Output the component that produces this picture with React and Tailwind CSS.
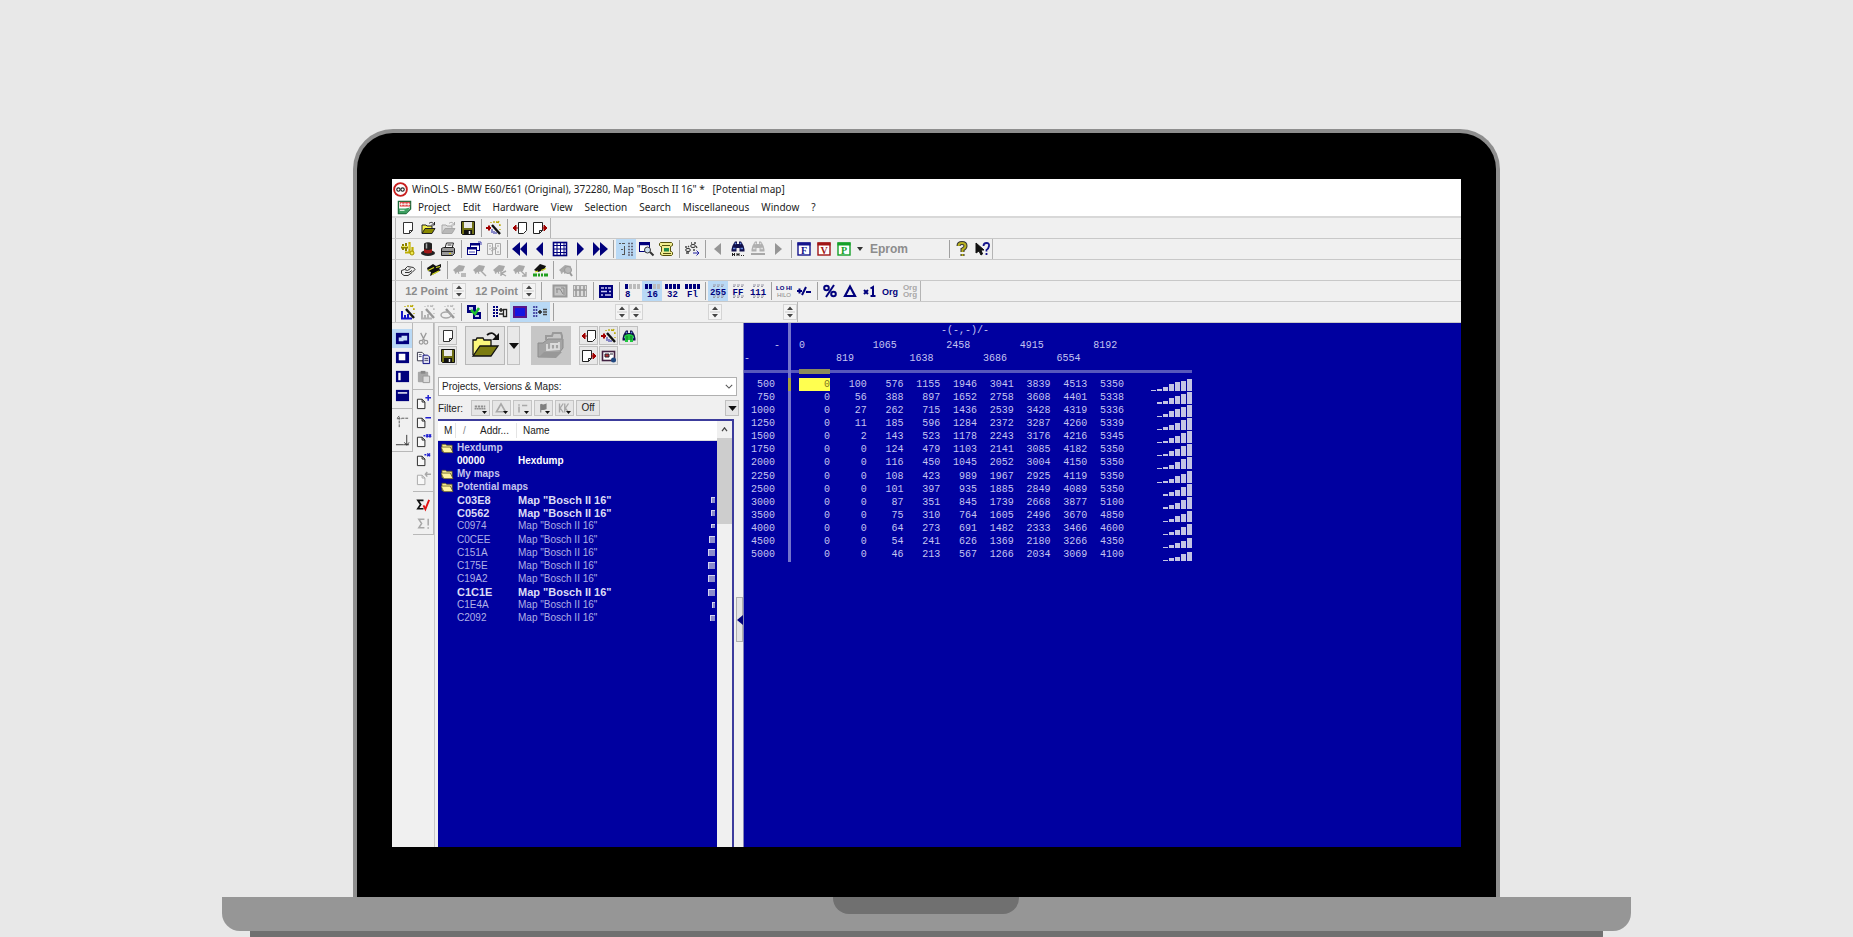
import clsx from 'clsx'

const NAVY = '#00007c'
const GREY = '#a8a8a8'

/* 16x16 toolbar glyphs */
const docShape = (c) => <path d="M3.5 2.5h9v8l-3 3h-6zM12.5 10.5h-3v3" fill="#fff" stroke={c} />
const folderShape = (line, front, back) => (
  <>
    <path d="M2 13V5h4l1 1h5v3" fill={back} stroke={line} />
    <path d="M2 13.5l3-5h10l-3 5z" fill={front} stroke={line} />
    <path d="M9 3.5c2-2 4-1 5 1M14.5 2v3h-3" fill="none" stroke={line} />
  </>
)
const wandShape = (c, sparkle, bars) => (
  <>
    <path d="M6 5l8 9" stroke={c} strokeWidth="2.4" />
    <path d="M10 2h1v1M13 5h1v1M8 1v2M13 1l-1 2M14 9v1M5 2v1" stroke={sparkle} fill="none" strokeWidth="1.3" />
    {bars && <path d="M2 14V7M5 14v-3M8 14v-4M1 14.5h11" stroke={bars} strokeWidth="2" />}
  </>
)
const binoShape = (c, light) => (
  <>
    <path d="M1.5 10.5q0-3 2.500-6.500l1-1.500h2V5h2V2.500h2l1 1.500q2.500 3.500 2.500 6.500v2h-5V9h-3v3.500h-5z" fill={c} />
    <path d="M3 9.500h2.500M10.500 9.500H13M5 5l1-1M10 4l1 1" stroke={light} strokeWidth="1.500" />
  </>
)
const dumpShape = (on, label) => (
  <>
    {[0, 1, 2, 3].map((i) => (
      <rect key={i} x={1 + i * 4} y="1" width="3" height="5" fill={i < on ? NAVY : '#bcbcbc'} />
    ))}
    <text x={label.length > 1 ? 3 : 1} y="14" fontSize="9" fontWeight="700" fill={NAVY} className="font-['Liberation_Mono',monospace]">
      {label}
    </text>
  </>
)
const digitShape = (label) => (
  <>
    <path d="M3 2h3M7 2h3M11 2h3M3 3.500h2M7 3.500h2M11 3.500h2M3 13h3M7 13h3M11 13h3M3 14.500h2M7 14.500h2M11 14.500h2" stroke="#9a9aa8" />
    <text x="8" y="11.500" textAnchor="middle" fontSize="9" fontWeight="700" fill={NAVY} className="font-['Liberation_Mono',monospace]">
      {label}
    </text>
  </>
)
const windowShape = (c, letter) => (
  <>
    <rect x="2" y="2" width="12" height="12" fill="#fff" stroke={c} strokeWidth="1.400" />
    <path d="M1.500 3h13" stroke={c} strokeWidth="3" />
    <text x="8" y="13" textAnchor="middle" fontSize="10" fontWeight="700" fill={c} className="font-['Liberation_Serif',serif]">
      {letter}
    </text>
  </>
)
const chipShape = (c, extra) => (
  <>
    <path d="M1 8l6-5 6 1-2 5-5 1-2 1z" fill={c} />
    <path d="M3 10l1 2M6 9l1 3" stroke={c} />
    {extra && <path d={extra} stroke={c} fill="none" strokeWidth="1.4" />}
  </>
)
const pageShape = (c, extra, mark) => (
  <>
    <path d="M1.500 4.500h5l3 3v7h-8zM6.500 4.500v3h3" fill="#f8f8f8" stroke={c} />
    <path d={extra} stroke={mark} strokeWidth="1.600" fill="none" />
  </>
)

const glyphs = {
  doc: docShape('#333'),
  open: folderShape('#222', '#8a8a00', '#f4f04a'),
  openOff: folderShape(GREY, '#b8b8b8', '#ddd'),
  save: (
    <>
      <path d="M1.500 1.500h13v13h-12l-1-1z" fill="#6e6e14" stroke="#111" />
      <path d="M4 2h8v6H4z" fill="#e8e8e8" />
      <path d="M4 10h8v4H4z" fill="#111" />
      <path d="M9.500 11v3" stroke="#eee" strokeWidth="1.500" />
    </>
  ),
  wand: (
    <>
      {wandShape('#111', '#b8a800')}
      <path d="M0 8h5M3 5.500v5" stroke="#a00000" strokeWidth="2" />
      <path d="M6 9v4M8 11v3M10 12v2" stroke="#2020a0" />
    </>
  ),
  docIn: (
    <>
      <path d="M6.500 2.500h8v8l-3 3h-5z" fill="#fff" stroke="#222" />
      <path d="M6 8H1M4 5L1 8l3 3z" stroke="#a00000" fill="#a00000" />
    </>
  ),
  docOut: (
    <>
      <path d="M1.500 2.500h9v8l-3 3h-6zM10.500 10.500h-3v3" fill="#fff" stroke="#222" />
      <path d="M10 8h5M12 5l3 3-3 3z" stroke="#a00000" fill="#a00000" />
    </>
  ),
  keys: (
    <>
      <path d="M1 6.500h7M3 3v6M6 2v8" stroke="#8a8000" strokeWidth="2" />
      <path d="M9.500 1v11M5 11.500h9M12.500 6v6" stroke="#c0b000" strokeWidth="2.200" />
      <path d="M2 5.500h5M9 3v5" stroke="#f0e850" />
      <circle cx="12" cy="12" r="2" fill="#f0e850" stroke="#a09000" />
    </>
  ),
  hat: (
    <>
      <ellipse cx="8" cy="12" rx="7" ry="3" fill="#222" />
      <path d="M4 2.500q4-2.500 8 0v9q-4 2-8 0z" fill="#222" />
      <path d="M4 8q4 2 8 0v3.500q-4 2-8 0z" fill="#a01818" />
      <path d="M6.500 2.500v5" stroke="#aaa" strokeWidth="1.500" />
    </>
  ),
  print: (
    <>
      <path d="M5 7l1.500-5h7L12 7" fill="#fff" stroke="#222" />
      <path d="M1.500 7.500l2-1h10l1 1v5l-2 2h-11z" fill="#999" stroke="#222" />
      <path d="M2 10.500h11M7.500 4h4" stroke="#222" />
      <path d="M9 12.500h2" stroke="#e0d000" />
    </>
  ),
  windows: (
    <>
      <rect x="4.500" y="2.500" width="9" height="7" fill="#fff" stroke={NAVY} />
      <rect x="1.500" y="6.500" width="9" height="7" fill="#fff" stroke={NAVY} />
      <path d="M4 3.500h10M1 7.500h10" stroke={NAVY} strokeWidth="2" />
      <path d="M3 11h6M12 1h3v3" stroke="#4040b0" fill="none" />
    </>
  ),
  compareOff: (
    <path d="M1.500 2.500h5v11h-5zM9.500 2.500h5v11h-5zM3 5h2M3 8h2M11 5h2M11 11h2M5 10l6-3M5 7h6" fill="none" stroke={GREY} />
  ),
  first: <path d="M8 1v14L0 8zM15 1v14L8 8z" fill={NAVY} />,
  prev: <path d="M11 1v14L4 8z" fill={NAVY} />,
  next: <path d="M5 1v14l7-7z" fill={NAVY} />,
  last: <path d="M1 1v14l7-7zM8 1v14l8-7z" fill={NAVY} />,
  prevOff: <path d="M11 2v12L4 8z" fill="#969696" />,
  nextOff: <path d="M5 2v12l7-6z" fill="#969696" />,
  grid: (
    <>
      <rect x="1.500" y="1.500" width="13" height="13" fill="#fff" stroke={NAVY} strokeWidth="1.600" />
      <path d="M1 4.500h14M1 8h14M1 11.500h14M5 2v13M8.500 2v13M12 2v13" stroke={NAVY} />
    </>
  ),
  tree: (
    <>
      <path d="M1 2.500h2M4 2.500h3M6.500 5v9M3 8.500h2M4 13.500h2" stroke="#555" fill="none" />
      <path d="M10 2.500h5M10 5.500h5M10 8.500h5M10 11.500h5M10 14h5" stroke="#667" strokeWidth="1.600" strokeDasharray="2 1" />
    </>
  ),
  zoomWin: (
    <>
      <rect x="1.500" y="1.500" width="10" height="9" fill="#fff" stroke={NAVY} />
      <path d="M1 3h11" stroke={NAVY} strokeWidth="2.500" />
      <circle cx="9.500" cy="9" r="3" fill="#cde" stroke="#333" />
      <path d="M12 11l3.500 3.500" stroke="#333" strokeWidth="2" />
    </>
  ),
  scroll: (
    <>
      <path d="M2.500 1.500h11l1 1v2l-2 1v5h1l1 1v2l-1 1h-9l-2-1v-2l1-1V5.500h-1l-1-1v-2z" fill="#f0ec90" stroke="#55500a" />
      <path d="M4 4.500h8M5 12.500h8" stroke="#55500a" />
      <path d="M6 7h5v3.500H6z" fill="#1f8a4a" />
    </>
  ),
  paws: (
    <>
      <ellipse cx="4" cy="9" rx="2.300" ry="1.700" fill="#ddd" stroke="#333" />
      <ellipse cx="9" cy="5" rx="2.300" ry="1.700" fill="#ddd" stroke="#333" />
      <path d="M1 6h2M4 5l1 1M7 2h1M10 2h2M12 5l1 2M2 12h3M9 9h2" stroke="#444" strokeWidth="1.300" />
      <path d="M9 12h6M12.500 9.500L15 12l-2.500 2.500" stroke="#2020a0" fill="none" />
    </>
  ),
  bino: (
    <>
      <g transform="translate(0 -2)">{binoShape('#10104c', '#6688dd')}</g>
      <path d="M2.500 12v3M4.500 12v3M2.500 13.500h2M7 12v3M9 12v3M7 13.500h2M11 14.500h1M13 14.500h1" stroke="#222" fill="none" />
    </>
  ),
  binoOff: (
    <>
      <g transform="translate(0 -2)">{binoShape('#b0b0b0', '#ddd')}</g>
      <path d="M1 13h14" stroke={GREY} strokeWidth="2" />
    </>
  ),
  winF: windowShape('#14148c', 'F'),
  winV: windowShape('#a01414', 'V'),
  winP: windowShape('#14a028', 'P'),
  help: (
    <>
      <path d="M4.500 5q0-3 3.500-3t3.500 3q0 2-3 3.500V11M8.500 13v2" fill="none" stroke="#333" strokeWidth="4" />
      <path d="M4.500 5q0-3 3.500-3t3.500 3q0 2-3 3.500V11M8.500 13v2" fill="none" stroke="#b8b020" strokeWidth="2" />
    </>
  ),
  pointHelp: (
    <>
      <path d="M2 2v10l3-2 2 4 1.500-1L7 9h3z" fill="#111" stroke="#111" />
      <path d="M9.500 5q0-3 3-3t2.500 3-2.500 4v1.500M12.500 12v2" stroke="#14148c" strokeWidth="1.800" fill="none" />
    </>
  ),
  hand: (
    <>
      <path d="M1.500 8.500l3-1 3-3 6 1 1.500 2-3 3-4 3H4l-2.500-2z" fill="#eee" stroke="#333" />
      <path d="M4.500 7.500l3 1 3-2M5 10.500h4l3-2" fill="none" stroke="#333" />
    </>
  ),
  chips: (
    <>
      <path d="M1 6l6-4 3 2 5-2v3l-2 2 2 1-5 3-6 3 1-4-3-1z" fill="#111" />
      <path d="M2 8.500l6-3M6 12.500l7-3.500M10 5.500l4-1" stroke="#d8e020" strokeWidth="1.200" />
    </>
  ),
  chipA: chipShape(GREY, 'M9 12h5M9 14h5'),
  chipB: chipShape(GREY, 'M9 9l5 5'),
  chipC: chipShape(GREY, 'M9 9v5M9 11l5 3M10 11l4-2'),
  chipD: chipShape(GREY, 'M9 9l5 5M14 10v4h-4'),
  chipOn: (
    <>
      <path d="M2 8l6-6 6 2-2 4-6 2z" fill="#111" />
      <path d="M9 8.500l5-2M3 10l3-1" stroke="#d8e020" strokeWidth="1.300" />
      <path d="M1 13h4M6 13h2M9 13h2M12 13h4" stroke="#20a020" strokeWidth="3" />
    </>
  ),
  chipFind: (
    <>
      {chipShape(GREY)}
      <circle cx="10" cy="8" r="3.500" fill="#b8b8b8" stroke="#999" />
      <path d="M12 11l2 3" stroke="#999" strokeWidth="2" />
    </>
  ),
  mapOff: (
    <>
      <rect x="1.500" y="2.500" width="13" height="11" fill="#c4c4c4" stroke="#999" strokeWidth="2" />
      <path d="M4 6h4l3 5h2M5 6v4M9 5h3v5" stroke="#888" fill="none" />
    </>
  ),
  colsOff: (
    <>
      <rect x="1.500" y="2.500" width="13" height="11" fill="#ddd" stroke={GREY} />
      <path d="M4 3v10M8 3v10M12 3v10M2 7h12" stroke="#999" strokeWidth="1.600" />
    </>
  ),
  hexWin: (
    <>
      <rect x="1" y="2" width="14" height="13" fill={NAVY} />
      <path d="M3 5h3M7 5h2M10 5h3M3 8.500h6M11 8.500h2M3 12h2M7 12h6" stroke="#c8c8f0" strokeWidth="1.500" />
    </>
  ),
  d8: dumpShape(1, '8'),
  d16: dumpShape(2, '16'),
  d32: dumpShape(4, '32'),
  dfl: dumpShape(4, 'Fl'),
  n255: digitShape('255'),
  nff: digitShape('FF'),
  n111: digitShape('111'),
  lohi: (
    <>
      <text x="8" y="7" textAnchor="middle" fontSize="6" fontWeight="700" fill={NAVY} className="font-['Liberation_Sans',sans-serif]">LO HI</text>
      <text x="8" y="14" textAnchor="middle" fontSize="6" fill="#888" className="font-['Liberation_Sans',sans-serif]">HILO</text>
    </>
  ),
  sign: <path d="M1 8h5M3.500 5.500v5M6 12l4-8M10 9h5" stroke={NAVY} strokeWidth="2" />,
  percent: (
    <>
      <circle cx="4.500" cy="5" r="2.300" fill="none" stroke={NAVY} strokeWidth="2" />
      <circle cx="11.500" cy="11" r="2.300" fill="none" stroke={NAVY} strokeWidth="2" />
      <path d="M12 2L4 14" stroke={NAVY} strokeWidth="2" />
    </>
  ),
  delta: <path d="M8 3.500L13 13H3z" fill="none" stroke={NAVY} strokeWidth="2.200" />,
  times: (
    <>
      <path d="M2 7l4 4M6 7l-4 4" stroke={NAVY} strokeWidth="2" />
      <path d="M8.500 5.500L11 4v9M8.500 13h5" stroke={NAVY} strokeWidth="2" fill="none" />
    </>
  ),
  org: <text x="8" y="12" textAnchor="middle" fontSize="9" fontWeight="700" fill={NAVY} className="font-['Liberation_Sans',sans-serif]">Org</text>,
  orgOff: (
    <>
      <text x="8" y="7" textAnchor="middle" fontSize="8" fontWeight="700" fill={GREY} className="font-['Liberation_Sans',sans-serif]">Org</text>
      <text x="8" y="14" textAnchor="middle" fontSize="8" fontWeight="700" fill={GREY} className="font-['Liberation_Sans',sans-serif]">Org</text>
    </>
  ),
  barWand: wandShape('#111', '#b8a800', '#1414c8'),
  barWandOff: wandShape('#999', '#bbb', '#b4b4b4'),
  ringWandOff: (
    <>
      {wandShape('#999', '#bbb')}
      <ellipse cx="6" cy="11" rx="5" ry="3" fill="none" stroke={GREY} strokeWidth="1.500" />
    </>
  ),
  screens: (
    <>
      <rect x="1" y="1" width="9" height="8" fill={NAVY} />
      <rect x="7" y="8" width="8" height="7" fill={NAVY} />
      <path d="M3 3h4v3H3zM9 11h4v2H9z" fill="#cce" />
      <path d="M5 6l4 4 4-6" stroke="#20c030" strokeWidth="2.500" fill="none" />
    </>
  ),
  listSwap: (
    <>
      <path d="M2 2v12M5 2v12" stroke={NAVY} strokeWidth="2" strokeDasharray="2 1" />
      <path d="M7 6h4M9 4v4M7 10h4" stroke="#222" strokeWidth="1.500" />
      <rect x="11.500" y="5.500" width="3" height="7" fill="#fff" stroke="#222" strokeWidth="1.400" />
    </>
  ),
  blueWin: (
    <>
      <rect x="1" y="2" width="14" height="12" fill="#5a1488" />
      <rect x="3" y="4" width="10" height="8" fill="#1414e0" />
    </>
  ),
  listMerge: (
    <>
      <path d="M2 2v12M4.500 2v12" stroke="#3a3a9c" strokeWidth="1.600" strokeDasharray="2 1" />
      <path d="M6 8h4M8 6v4" stroke="#222" strokeWidth="1.500" />
      <path d="M11 5.500h4M11 8h4M11 10.500h4" stroke="#444" strokeWidth="1.500" />
    </>
  ),
  selWin: (
    <>
      <rect x="1" y="2" width="14" height="12" fill={NAVY} />
      <path d="M4 11V7h3V5h6v5h-4v1z" fill="#c4dcf8" />
    </>
  ),
  winCenter: (
    <>
      <rect x="1" y="2" width="14" height="12" fill={NAVY} />
      <path d="M4 4h7v7H4z" fill="#fff" />
    </>
  ),
  winLeft: (
    <>
      <rect x="1" y="2" width="14" height="12" fill={NAVY} />
      <path d="M3.500 4h2.500v8H3.500z" fill="#fff" />
    </>
  ),
  winTop: (
    <>
      <rect x="1" y="2" width="14" height="12" fill={NAVY} />
      <path d="M3 4.500h10v1.500H3z" fill="#fff" />
    </>
  ),
  cornerTop: <path d="M4.500 14V3M2 5h5M7 4.500h7M4.500 2l-2 2" stroke="#555" fill="none" strokeDasharray="3 1" />,
  cornerBottom: <path d="M12.500 2v11M9 12.500h6M1 12.500h8M10 10l2.500 3L15 10" stroke="#333" fill="none" />,
  cut: (
    <>
      <path d="M5 2l4 8M11 2L7 10" stroke="#999" strokeWidth="1.300" />
      <circle cx="5.500" cy="12" r="2" fill="none" stroke="#999" strokeWidth="1.300" />
      <circle cx="10.500" cy="12" r="2" fill="none" stroke="#999" strokeWidth="1.300" />
    </>
  ),
  copy: (
    <>
      <path d="M1.500 2.500h5l2 2v7h-7z" fill="#fff" stroke="#334" />
      <path d="M7.500 5.500h5l2 2v7h-7z" fill="#dde" stroke={NAVY} />
      <path d="M3 5h3M3 7h3M9 9h4M9 11h4" stroke="#446" />
    </>
  ),
  paste: (
    <>
      <rect x="2" y="3" width="11" height="11" rx="1" fill={GREY} />
      <path d="M5 2h5v3H5z" fill="#888" />
      <path d="M7.500 7.500h7v7h-7z" fill="#ddd" stroke="#999" />
    </>
  ),
  pagePlus: pageShape('#222', 'M10 3h6M13 0v6', '#2020d0'),
  pageMinus: pageShape('#222', 'M10 4h6', '#2020d0'),
  pageX: pageShape('#222', 'M8 3h2M11 1.500l2 3M13 1.500l-2 3M14 1.500l2 3M16 1.500l-2 3', '#2020d0'),
  pageX2: pageShape('#222', 'M9 3h2M12 1.500l3 3M15 1.500l-3 3', '#2020d0'),
  pageOff: pageShape(GREY, 'M10 3.500h6M12 1l-2 2.500L12 6', GREY),
  sumOk: (
    <>
      <path d="M8 3.500H2l3 4.500-3 4.500h6" stroke="#111" strokeWidth="1.800" fill="none" />
      <path d="M8 9l2 4 4-10" stroke="#e01010" strokeWidth="2" fill="none" />
    </>
  ),
  sumOff: <path d="M9 3.500H3l3 4.500-3 4.500h6M13 3v7M13 12v1.500" stroke={GREY} strokeWidth="1.600" fill="none" />,
  tree3d: (
    <>
      {binoShape('#10104c', '#6688dd')}
      <path d="M3 8q5-4 10 0l-1 2v4H9v-2H7v2H4v-4z" fill="#20c840" />
      <path d="M6 8v4M10 8v4" stroke="#107020" />
    </>
  ),
  card: (
    <>
      <rect x="1.500" y="3.500" width="12" height="9" fill="#fff" stroke="#402040" strokeWidth="1.600" />
      <path d="M4 6h4v3H4zM9 6h3" fill="#c03030" stroke="#223" />
      <circle cx="12.500" cy="12" r="2.500" fill="#204880" />
    </>
  ),
  filtA: <path d="M1 6h14M2 8v2M5 8v2M8 8v2M11 8v2M14 8v2" stroke="#909090" strokeWidth="2.500" strokeDasharray="3 1" />,
  filtB: <path d="M8 2.500L14 13H2z" fill="none" stroke={GREY} strokeWidth="2.200" />,
  filtC: <path d="M4 3v2M4 6v8M8 4.500h7" stroke={GREY} strokeWidth="2" />,
  filtD: <path d="M5 3v11M5 3q3 2 7 0v6q-4 2-7 0" stroke="#808080" strokeWidth="1.500" fill="#808080" />,
  filtE: <path d="M2 2v12M7 2L3 8l4 6M9 2v12M14 2l-4 6 4 6" stroke={GREY} strokeWidth="1.800" fill="none" />,
}

function Glyph({ name, className = 'size-4' }) {
  return (
    <svg viewBox="0 0 16 16" className={clsx('shrink-0 overflow-visible', className)} aria-hidden="true">
      {glyphs[name]}
    </svg>
  )
}

function Tool({ name, active }) {
  return (
    <button
      type="button"
      aria-label={name}
      className={clsx('flex size-5 shrink-0 items-center justify-center', active && 'bg-[#b9d9f5]')}
    >
      <Glyph name={name} />
    </button>
  )
}

function Spinner() {
  return (
    <button type="button" aria-label="Change value" className="h-4 w-[14px] shrink-0 border border-[#d4d4d4] bg-[#f4f4f4]">
      <svg viewBox="0 0 12 14" className="h-full w-full">
        <path d="M6 1.500l3 3.500H3zM6 12.500L9 9H3z" fill="#444" />
        <path d="M1 7h10" stroke="#ccc" />
      </svg>
    </button>
  )
}

function PointField() {
  return (
    <div className="flex w-[70px] shrink-0 items-center justify-end gap-1 pr-[2px]">
      <span className="text-[11px] font-bold whitespace-nowrap text-[#8c8c8c]">12 Point</span>
      <Spinner />
    </div>
  )
}

function Sep() {
  return (
    <div className="flex w-[6px] shrink-0 justify-center py-px">
      <div className="w-px bg-[#a0a0a0]" />
    </div>
  )
}

/* '|' is a separator, a leading '*' marks a pressed button */
function Tools({ items }) {
  return items.split(' ').map((item, i) =>
    item === '|' ? <Sep key={i} /> : <Tool key={i} name={item.replace('*', '')} active={item.startsWith('*')} />
  )
}

function Bar({ children }) {
  return (
    <div className="flex h-[21px] border-b border-[#c8c8c8]">
      <div className="flex items-stretch border-r border-[#b4b4b4]">
        <div className="mr-[2px] ml-[3px] w-px bg-[#b4b4b4]" />
        {children}
      </div>
    </div>
  )
}

function TitleBar() {
  return (
    <div className="flex h-5 items-center gap-1 bg-white pl-px text-[10px] text-[#222]">
      <svg viewBox="0 0 16 16" className="size-[15px]">
        <circle cx="8" cy="8" r="6.800" fill="#fff" stroke="#c81e1e" strokeWidth="2" />
        <circle cx="5.800" cy="8" r="1.800" fill="none" stroke="#222" strokeWidth="1.200" />
        <circle cx="10.200" cy="8" r="1.800" fill="none" stroke="#222" strokeWidth="1.200" />
      </svg>
      <h1 className="whitespace-pre">WinOLS - BMW E60/E61 (Original), 372280, Map "Bosch II 16" *   [Potential map]</h1>
    </div>
  )
}

const menus = ['Project', 'Edit', 'Hardware', 'View', 'Selection', 'Search', 'Miscellaneous', 'Window', '?']

function MenuBar() {
  return (
    <nav className="flex h-[19px] items-center gap-3 border-b-2 border-[#d8d8d8] bg-white pl-[5px] text-[10px] text-[#222]">
      <svg viewBox="0 0 16 16" className="-mr-[6px] size-[15px]">
        <path d="M1.500 1.500h13v8l-5 5h-8z" fill="#fff" stroke="#1c6b3a" strokeWidth="1.400" />
        <path d="M3 2h11v5H3z" fill="#e04848" />
        <path d="M5 3v3M8.500 3v3M12 3v3M3 4.500h11" stroke="#fff" />
        <path d="M2 9h7l5-1-4 6H2z" fill="#3ca060" />
        <path d="M3 11h5" stroke="#fff" />
      </svg>
      {menus.map((m) => (
        <button key={m} type="button">
          {m}
        </button>
      ))}
    </nav>
  )
}

function Toolbars() {
  return (
    <div>
      <Bar>
        <Tools items="doc open openOff save | wand | docIn docOut" />
      </Bar>
      <Bar>
        <Tools items="keys hat print | windows compareOff | first prev grid next last | *tree zoomWin scroll | paws | prevOff bino binoOff nextOff | winF winV winP" />
        <button type="button" aria-label="More" className="flex w-3 items-center justify-center">
          <svg viewBox="0 0 8 8" className="size-2">
            <path d="M1 2h6L4 6z" fill="#333" />
          </svg>
        </button>
        <span className="w-20 self-center pl-1 text-xs font-bold text-[#8c8c8c]">Eprom</span>
        <Tools items="| help pointHelp" />
      </Bar>
      <Bar>
        <Tools items="hand | chips | chipA chipB chipC chipD chipOn | chipFind" />
      </Bar>
      <Bar>
        <PointField />
        <PointField />
        <Sep />
        <div className="w-[6px]" />
        <Tools items="mapOff colsOff | hexWin | d8 *d16 d32 dfl | *n255 nff n111 | lohi sign | percent delta times org orgOff" />
      </Bar>
      <Bar>
        <Tools items="barWand barWandOff ringWandOff | screens | listSwap *blueWin *listMerge |" />
        <div className="flex items-center pl-[59px]">
          <Spinner />
          <Spinner />
          <div className="w-[65px]" />
          <Spinner />
          <div className="w-[61px]" />
          <Spinner />
        </div>
      </Bar>
    </div>
  )
}

function SideColumn({ groups }) {
  return (
    <div className="w-[21px] shrink-0 self-start border-r border-b border-[#b8b8b8] pt-[6px] pb-px">
      {groups.map((group, i) => (
        <div key={i} className={clsx(i > 0 && 'mt-[3px] border-t border-[#b8b8b8] pt-[3px]')}>
          {group.split(' ').map((item) => (
            <button
              key={item}
              type="button"
              aria-label={item}
              className={clsx('flex h-[19px] w-5 items-center justify-center', item === 'selWin' && 'bg-[#b9d9f5]')}
            >
              <Glyph name={item} className="size-[15px]" />
            </button>
          ))}
        </div>
      ))}
    </div>
  )
}

function PanelButton({ name, className = 'size-[19px]', glyph }) {
  return (
    <button
      type="button"
      aria-label={name}
      className={clsx('flex items-center justify-center border border-[#c0c0c0] bg-[#e8e8e8]', className)}
    >
      <Glyph name={name} className={glyph} />
    </button>
  )
}

function PanelButtons() {
  return (
    <div className="flex h-[39px] items-start">
      <div className="flex flex-col gap-px">
        <PanelButton name="doc" />
        <PanelButton name="save" />
      </div>
      <button type="button" aria-label="Open project" className="ml-2 flex h-[39px] w-10 items-center justify-center border border-[#b8b8b8] bg-[#e4e4e4]">
        <svg viewBox="0 0 32 32" className="size-8">
          <path d="M4 25V10h3l1-2h6l1 2h7v6" fill="#fbf77c" stroke="#111" strokeWidth="1.300" />
          <path d="M4 26l7-10h18l-7 10z" fill="#7c7c10" stroke="#111" strokeWidth="1.300" />
          <path d="M18 5q6-5 10 3" fill="none" stroke="#111" strokeWidth="1.800" />
          <path d="M30 3v7h-7z" fill="#111" />
        </svg>
      </button>
      <button type="button" aria-label="Recent projects" className="ml-[2px] flex h-[39px] w-[13px] items-center justify-center border border-[#c0c0c0] bg-[#e8e8e8]">
        <DropArrow className="h-[6px] w-[10px]" />
      </button>
      <button type="button" aria-label="Import" disabled className="ml-[11px] flex h-[39px] w-10 items-center justify-center bg-[#c6c6c6]">
        <svg viewBox="0 0 32 32" className="size-8">
          <path d="M3 27V13h5l5-4h15v9l-7 9z" fill="#a4a4a4" stroke="#8c8c8c" />
          <path d="M11 10V6h6l1-3h8l1 3v4" fill="none" stroke="#9a9a9a" strokeWidth="2" />
          <path d="M12 14v7M16 13v7M16 14h8M20 14v6M24 12v8M12 20l12-1" stroke="#dcdcdc" strokeWidth="1.800" />
          <path d="M4 27l5-5h18l-6 6z" fill="#989898" />
        </svg>
      </button>
      <div className="ml-2 grid grid-cols-3 gap-px">
        <PanelButton name="docIn" />
        <PanelButton name="wand" />
        <PanelButton name="tree3d" />
        <PanelButton name="docOut" />
        <PanelButton name="card" />
      </div>
    </div>
  )
}

function DropArrow({ className }) {
  return (
    <svg viewBox="0 0 10 6" className={className} aria-hidden="true">
      <path d="M0 0h10L5 6z" fill="#111" />
    </svg>
  )
}

function FilterRow() {
  return (
    <div className="mt-1 flex h-4 items-center gap-px text-[10px] text-[#222]">
      <span className="w-8">Filter:</span>
      {['filtA', 'filtB', 'filtC', 'filtD', 'filtE'].map((name) => (
        <button key={name} type="button" aria-label={name} className="mr-px flex h-4 w-[19px] items-end justify-center border border-[#c4c4c4] bg-[#e6e6e6]">
          <Glyph name={name} className="mb-px size-3" />
          <DropArrow className="-ml-1 mb-px h-[3px] w-[5px]" />
        </button>
      ))}
      <button type="button" className="h-4 w-6 border border-[#c0c0c0] bg-[#e6e6e6] leading-3">
        Off
      </button>
      <button type="button" aria-label="Filter options" className="mr-1 ml-auto flex h-4 w-[14px] items-center justify-center border border-[#c0c0c0] bg-[#e6e6e6]">
        <DropArrow className="h-[5px] w-[9px]" />
      </button>
    </div>
  )
}

const maps = [
  { addr: 'C03E8', bold: true, size: 'h-[6px] w-[4px]' },
  { addr: 'C0562', bold: true, size: 'h-[6px] w-[4px]' },
  { addr: 'C0974', size: 'h-[4px] w-[4px]' },
  { addr: 'C0CEE', size: 'h-[7px] w-[6px]' },
  { addr: 'C151A', size: 'h-[7px] w-[7px]' },
  { addr: 'C175E', size: 'h-[7px] w-[7px]' },
  { addr: 'C19A2', size: 'h-[7px] w-[7px]' },
  { addr: 'C1C1E', bold: true, size: 'h-[7px] w-[7px]' },
  { addr: 'C1E4A', size: 'h-[6px] w-[3px]' },
  { addr: 'C2092', size: 'h-[6px] w-[5px]' },
]

function FolderRow({ children }) {
  return (
    <li className="flex items-center gap-[3px] pl-[3px] text-[10px] font-bold text-[#c4c4ee]">
      <svg viewBox="0 0 14 12" className="h-3 w-[13px]">
        <path d="M1 10V2h4l1 1h6v7z" fill="#f4e88c" stroke="#5c5420" strokeWidth=".8" />
        <path d="M0 5h10l3 6H3z" fill="#fff4a0" stroke="#5c5420" strokeWidth=".8" />
      </svg>
      {children}
    </li>
  )
}

function MapList() {
  return (
    <div className="mt-[3px] mr-[9px] flex flex-1 border-t-2 border-r-2 border-[#3c3c9c]">
      <div className="flex-1 bg-[#0000a0]">
        <div className="flex h-5 items-center border-b border-[#ddd] bg-white text-[10px] text-[#222]">
          <span className="w-[18px] border-r border-[#e4e4e4] pl-[6px]">M</span>
          <span className="w-6 pl-[7px] text-[#888]">/</span>
          <span className="w-[37px] border-r border-[#e4e4e4]">Addr...</span>
          <span className="pl-[6px]">Name</span>
        </div>
        <ul className="grid h-[184px] auto-rows-fr leading-3">
          <FolderRow>Hexdump</FolderRow>
          <li className="flex items-center pl-[19px] text-[10px] font-bold text-white">
            <span className="w-[61px]">00000</span>
            Hexdump
          </li>
          <FolderRow>My maps</FolderRow>
          <FolderRow>Potential maps</FolderRow>
          {maps.map((m) => (
            <li
              key={m.addr}
              className={clsx(
                'flex items-center pr-[2px] pl-[19px]',
                m.bold ? 'text-[11px] font-bold text-[#dcdcf6]' : 'text-[10px] text-[#b0b0e6]'
              )}
            >
              <span className="w-[61px]">{m.addr}</span>
              <span className="flex-1">Map "Bosch II 16"</span>
              <span className={clsx('border-t border-l border-[#d4d4f0] bg-[#8c8ccc]', m.size)} />
            </li>
          ))}
        </ul>
      </div>
      <div className="w-[15px] bg-[#f0f0f0]">
        <button type="button" aria-label="Scroll up" className="flex h-[17px] w-full items-center justify-center">
          <svg viewBox="0 0 8 6" className="h-[5px] w-[7px]">
            <path d="M1 5l3-4 3 4" fill="none" stroke="#444" strokeWidth="1.500" />
          </svg>
        </button>
        <div className="h-[86px] bg-[#cdcdcd]" />
      </div>
    </div>
  )
}

function ProjectPanel() {
  return (
    <div className="flex w-[309px] shrink-0 flex-col border-l border-[#c8c8c8] pt-[3px] pl-[3px]">
      <PanelButtons />
      <div className="relative mt-3 mr-[6px]">
        <select aria-label="View" className="block h-[19px] w-full appearance-none border border-[#b0b0b0] bg-white pl-[3px] text-[10px] text-[#222]">
          <option>Projects, Versions &amp; Maps:</option>
        </select>
        <svg viewBox="0 0 10 6" className="pointer-events-none absolute top-[7px] right-1 h-[5px] w-2">
          <path d="M1 1l4 4 4-4" fill="none" stroke="#555" strokeWidth="1.300" />
        </svg>
      </div>
      <FilterRow />
      <div className="relative flex flex-1">
        <MapList />
        <button type="button" aria-label="Collapse panel" className="absolute top-[181px] right-0 flex h-[45px] w-[7px] items-center justify-center border border-[#b0b0b0] bg-[#e4e4e4]">
          <svg viewBox="0 0 6 10" className="h-[10px] w-[6px] shrink-0">
            <path d="M6 0v10L0 5z" fill={NAVY} />
          </svg>
        </button>
      </div>
    </div>
  )
}

const axisX = [0, 819, 1065, 1638, 2458, 3686, 4915, 6554, 8192]

const rows = [
  [500, 0, 100, 576, 1155, 1946, 3041, 3839, 4513, 5350],
  [750, 0, 56, 388, 897, 1652, 2758, 3608, 4401, 5338],
  [1000, 0, 27, 262, 715, 1436, 2539, 3428, 4319, 5336],
  [1250, 0, 11, 185, 596, 1284, 2372, 3287, 4260, 5339],
  [1500, 0, 2, 143, 523, 1178, 2243, 3176, 4216, 5345],
  [1750, 0, 0, 124, 479, 1103, 2141, 3085, 4182, 5350],
  [2000, 0, 0, 116, 450, 1045, 2052, 3004, 4150, 5350],
  [2250, 0, 0, 108, 423, 989, 1967, 2925, 4119, 5350],
  [2500, 0, 0, 101, 397, 935, 1885, 2849, 4089, 5350],
  [3000, 0, 0, 87, 351, 845, 1739, 2668, 3877, 5100],
  [3500, 0, 0, 75, 310, 764, 1605, 2496, 3670, 4850],
  [4000, 0, 0, 64, 273, 691, 1482, 2333, 3466, 4600],
  [4500, 0, 0, 54, 241, 626, 1369, 2180, 3266, 4350],
  [5000, 0, 0, 46, 213, 567, 1266, 2034, 3069, 4100],
]

function RowBars({ values }) {
  return (
    <svg viewBox="0 0 54 12" className="ml-auto block h-3 w-[54px]" aria-hidden="true">
      {values.map((v, i) => {
        const h = Math.floor(v / 415)
        return <rect key={i} x={i * 6 + 1} y={12 - h} width="5" height={h} fill="#c4c4e4" />
      })}
    </svg>
  )
}

function AxisRow({ odd, mark }) {
  return (
    <tr className="h-[13px]">
      <td className={odd ? 'text-left' : 'pr-2 text-right'}>{mark}</td>
      <td className="border-l-[3px] border-[#7474cc]" />
      {axisX.map((x, i) => (
        <th key={x} scope="col" className={clsx('text-left font-normal', i > 0 && 'pl-[6px]')}>
          {(i % 2 === 1) === odd ? x : ''}
        </th>
      ))}
      <td />
    </tr>
  )
}

function MapTable() {
  return (
    <div className="min-w-0 flex-1 overflow-hidden border-l border-[#8484b8] bg-[#0000a0] font-['Liberation_Mono',monospace] text-[10px] leading-3 text-[#c4c4f0]">
      <table className="h-[239px] w-[448px] table-fixed border-separate border-spacing-0">
        <colgroup>
          <col className="w-[44px]" />
          <col className="w-[11px]" />
          <col className="w-[31px]" />
          {axisX.slice(1).map((x) => (
            <col key={x} />
          ))}
          <col className="w-[68px]" />
        </colgroup>
        <thead>
          <tr className="h-4">
            <td />
            <td className="border-l-[3px] border-[#7474cc]" />
            <td colSpan={9} className="pl-[142px] text-left">
              -(-,-)/-
            </td>
            <td />
          </tr>
          <AxisRow odd={false} mark="-" />
          <AxisRow odd mark="-" />
          <tr className="h-[13px]">
            <td className="p-0">
              <div className="h-[3px] bg-[#5858bc]" />
            </td>
            <td className="border-l-[3px] border-[#7474cc] p-0">
              <div className="h-[3px] bg-[#5858bc]" />
            </td>
            <td className="p-0">
              <div className="h-[5px] bg-[#8c8c5c]" />
            </td>
            <td colSpan={9} className="p-0">
              <div className="h-[3px] bg-[#5858bc]" />
            </td>
          </tr>
        </thead>
        <tbody>
          {rows.map(([rpm, ...values], r) => (
            <tr key={rpm}>
              <th scope="row" className="pr-[13px] text-right font-normal">
                {rpm}
              </th>
              <td className={clsx('border-l-[3px]', r === 0 ? 'border-[#a8a040]' : 'border-[#7474cc]')} />
              {values.map((v, i) => (
                <td key={i} className={clsx('text-right', r === 0 && i === 0 && 'bg-[#ffff50] text-[#807820]')}>
                  {v}
                </td>
              ))}
              <td className="p-0">
                <RowBars values={values} />
              </td>
            </tr>
          ))}
        </tbody>
      </table>
    </div>
  )
}

export default function App() {
  return (
    <div className="flex h-screen flex-col items-center overflow-hidden bg-[#e8e8e8] pt-[129px]">
      <div className="w-[61.9%] shrink-0 rounded-t-[40px] border-4 border-b-0 border-[#8e8e8e] bg-black px-[35px] pt-[46px] pb-[50px]">
        <main className="flex flex-col overflow-hidden bg-[#f0f0f0] font-['Liberation_Sans',Arial,sans-serif]">
          <div className="font-['Noto_Sans',sans-serif]">
            <TitleBar />
            <MenuBar />
          </div>
          <Toolbars />
          <div className="flex min-h-[524px]">
            <SideColumn groups={['selWin winCenter winLeft winTop', 'cornerTop cornerBottom']} />
            <SideColumn groups={['cut copy paste', 'pagePlus pageMinus pageX pageX2 pageOff', 'sumOk sumOff']} />
            <ProjectPanel />
            <MapTable />
          </div>
        </main>
      </div>
      <div className="flex h-[34px] w-[76%] shrink-0 justify-center rounded-b-[18px] bg-[#969696]">
        <div className="h-[17px] w-[186px] rounded-b-[16px] bg-[#707070]" />
      </div>
      <div className="h-6 w-[73%] shrink-0 rounded-b-[20px] bg-[#707070]" />
    </div>
  )
}
